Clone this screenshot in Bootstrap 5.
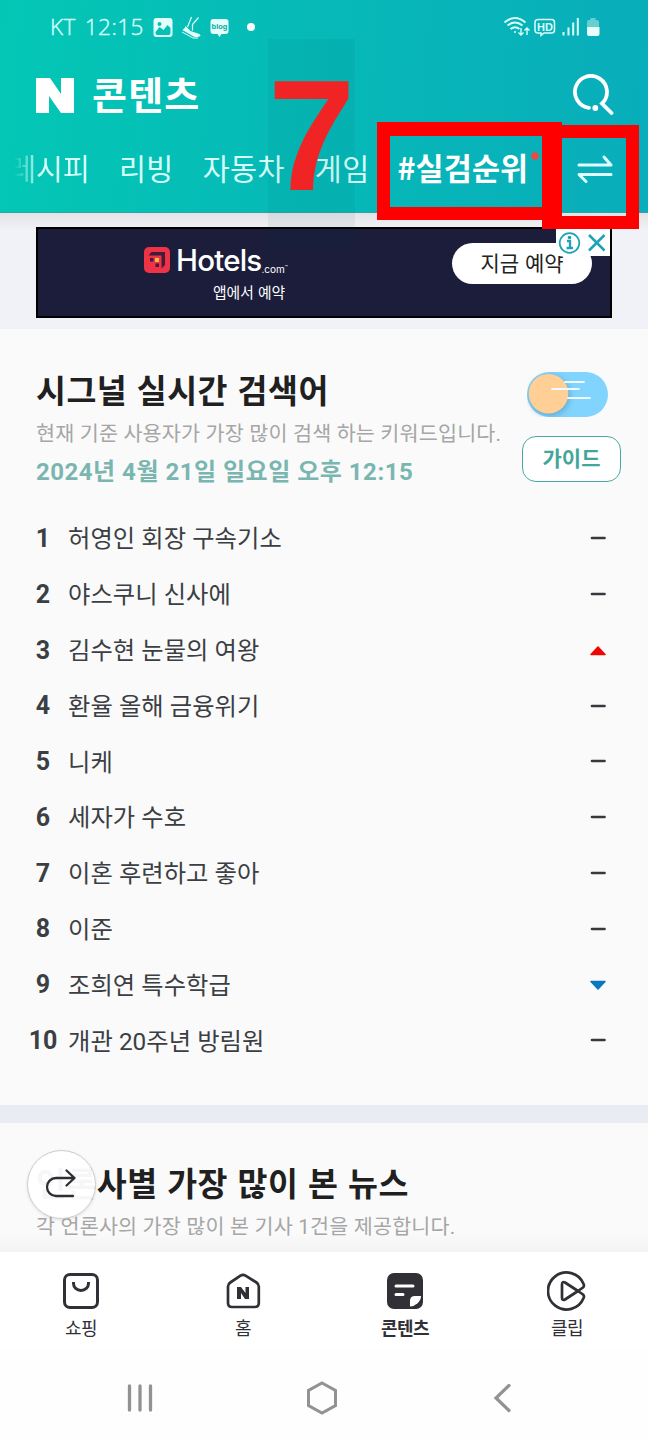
<!DOCTYPE html>
<html lang="ko">
<head>
<meta charset="utf-8">
<meta name="viewport" content="width=device-width, initial-scale=1">
<title>콘텐츠</title>
<link href="https://cdn.jsdelivr.net/npm/bootstrap@5.3.0/dist/css/bootstrap.min.css" rel="stylesheet">
<style>
body{width:648px;height:1440px;overflow:hidden;background:#fafafa;font-family:Roboto,"Noto Sans CJK KR",sans-serif;color:#3b3f44;line-height:1.2}
svg{display:block;flex:none}
.kr{font-family:"Noto Sans CJK KR",sans-serif}
.nw{white-space:nowrap}
.app-head{height:213px;background:linear-gradient(94deg,#03c7b5 0%,#06bab7 45%,#09adbb 100%);border-bottom:1px solid #2aa5a2;color:#fff}
.status{height:54px;padding:0 48px 0 50px;font:400 22.5px/54px "Open Sans","Noto Sans CJK KR",sans-serif;color:#d9fffb}
.clock{letter-spacing:.5px;word-spacing:2.500px;width:99px;font-weight:300;-webkit-text-stroke:.4px #d9fffb}
.brand-row{height:82px;padding:0 33px 0 36px}
.brand-name{font-size:38px;font-weight:700;line-height:78px;height:82px;margin-left:18px;letter-spacing:1.2px}
.cats{height:66px;font-size:29.3px;line-height:66px;color:#d4fffb}
.cats>span,.cats>b,.cats .cut{transform:translateY(-2px)}
.cats>span{letter-spacing:.4px}
.cats .cut{width:78px;margin-left:12px;-webkit-mask-image:linear-gradient(90deg,transparent 2px,#000 30px);mask-image:linear-gradient(90deg,transparent 2px,#000 30px)}
.cats .now{font-size:30.5px;letter-spacing:.1px}
.ad-zone{height:116px;background:linear-gradient(#e4e3e7 0,#f1f2f8 18px);padding:14px 36px 0}
.ad{height:91px;background:#1b1d3b;border:2px solid #000;color:#fff}
.ad-copy{width:152px;margin-left:106px;padding-top:15px}
.hotels{font:500 29.5px/32px Inter,"Noto Sans",sans-serif;letter-spacing:-.8px}
.dotcom{font:400 10px/12px Inter,sans-serif;padding-top:15px}
.ad-sub{font-size:14.8px;line-height:22px;padding-left:69px;margin-top:5px}
.ad-btn{width:140px;height:41px;border-radius:21px;background:#fff;color:#222;font-size:21px;line-height:39px;right:18px;top:14px;text-align:center}
.ad-choices{right:0;top:0;width:54px;height:27px;background:#fff}
.signal{height:776px;padding-top:38px}
.ttl{font-size:32.5px;font-weight:700;color:#202020;line-height:44px;letter-spacing:.5px;margin:0}
.desc{font-size:20.7px;letter-spacing:.17px;line-height:38px;padding-top:4px;height:41px;color:#a6a6a6}
.stamp{font-size:24px;font-weight:700;line-height:41px;height:38px;color:#7ab6b0;letter-spacing:.5px}
.head-l{width:486px;padding-left:36px}
.toggle{width:81px;height:45px;border-radius:23px;background:#80d4fe;margin-left:5px}
.guide{width:99px;height:46px;border:1.6px solid #46aaa1;border-radius:14px;background:#fff;color:#44a59b;font-size:21px;font-weight:700;line-height:41px;text-align:center;margin-top:19px}
.ranks{margin-top:20px}
.rank{height:55.8px;padding:0 42.5px 0 0}
.rank b{width:86px;font-size:25px;text-align:center;flex:none;font-weight:700;line-height:56px;padding-top:2px}
.rank .kw{font-size:24.3px;line-height:56px;margin-left:-18px;padding-top:3px;letter-spacing:.05px}
.rank svg{margin-top:1.500px}
.split{height:18px;background:#e9ecf2}
.news{height:129px;padding:37px 36px 0;background:linear-gradient(#fafafa 85%,#f3f3f3)}
.fab{width:69px;height:69px;left:27px;top:27px;border-radius:50%;background:rgba(255,255,255,.96);border:1px solid #ccc;box-shadow:0 1px 3px rgba(0,0,0,.12)}
.tabs{height:98px;background:#fff;color:#303036;font-size:18px}
.tabs>div{width:162px;padding-top:18px}
.tabs .lbl{line-height:26px;margin-top:1.500px;letter-spacing:-.5px}
.sys{height:90px;background:#fefefe;padding:6px 55px 0 50px}
.note-seven{left:268px;top:39px;width:87px;height:211px;background:rgba(0,60,60,.06);color:#f02424;font:700 157px/193px "Liberation Sans",sans-serif}
.frame-a{left:377px;top:122px;width:185px;height:98px;border:solid red;border-width:14px 20px 13px 13px}
.frame-b{left:542px;top:125px;width:97px;height:104px;border:solid red;border-width:13px 13px 13px 20px}
</style>
</head>
<body class="position-relative">
<header class="app-head">
  <div class="status d-flex align-items-center">
    <span class="nw clock">KT 12:15</span>
    <svg width="94" height="24" viewBox="149.500 15 94 24" fill="#e2fffc">
      <path fill-rule="evenodd" d="M157 18h13a3 3 0 0 1 3 3v13a3 3 0 0 1-3 3h-13a3 3 0 0 1-3-3V21a3 3 0 0 1 3-3zM156 32l4-5 4 3 4-5 3 3v5a2 2 0 0 1-2 2h-11q-2 0-2-2zM160 22a2 2 0 1 1 0 4 2 2 0 0 1 0-4z"/>
      <path d="M183 30q3-2 3-4l5 5 9 3q1 1 1 2-3 2-7 .5z"/><path d="M182.500 32l11 6h5" fill="none" stroke="#e2fffc"/><path d="M192 17l-4 10M199 17.500l-6 7v6" fill="none" stroke="#e2fffc" stroke-width="1.200"/>
      <path d="M214 19h12a3 3 0 0 1 3 3v9a3 3 0 0 1-3 3h-4l-2 3-2-3h-4a3 3 0 0 1-3-3v-9a3 3 0 0 1 3-3z"/>
      <text x="220" y="29" font-size="7.500" font-weight="700" text-anchor="middle" fill="#06a5a0" font-family="Liberation Sans">blog</text>
    </svg>
    <svg width="10" height="10" viewBox="0.500 0 10 10" class="ms-1"><circle cx="4.500" cy="5" r="4" fill="#fff"/></svg>
    <svg class="ms-auto" width="98" height="24" viewBox="502 15 98 24" fill="none" stroke="#d9fffb" stroke-width="2">
      <path d="M504.500 22.500q10.500-9 21 0M507.500 25.500q7.500-6 15 0M510.500 29q4.500-3.500 9 0"/><circle cx="515" cy="32" r="1" fill="#d9fffb" stroke="none"/>
      <path d="M521 28v7m-2.500-2.500 2.500 2.500 2.500-2.500M527 35v-7m-2.500 2.500 2.500-2.500 2.500 2.500" stroke-width="1.400"/>
      <path d="M537.500 19.500h14a3 3 0 0 1 3 3V30a3 3 0 0 1-3 3H544l-3 2.500V33h-3a3 3 0 0 1-3-3v-7.500a3 3 0 0 1 3-3z" stroke-width="1.500"/>
      <text x="545" y="30.500" font-size="11" font-weight="700" text-anchor="middle" fill="#d9fffb" stroke="none" font-family="Liberation Sans">HD</text>
      <path d="M563.500 32v3.500M568.500 27.500v8M573.200 22.500v13M577.800 18v17.500"/>
      <path d="M587 27v-5q0-2 2-2h1.500v-2h5v2h1.500q2 0 2 2v5z" fill="#68cfcf" stroke="none"/><path d="M587 27h12.500v7q0 2-2 2H589q-2 0-2-2z" fill="#e9fffd" stroke="none"/>
    </svg>
  </div>
  <div class="brand-row d-flex align-items-center">
    <svg width="38" height="35" viewBox="0 0 38 35" fill="#fff"><path d="M0 0h14l11 16V0h13v35H25L13 18v17H0z"/></svg>
    <span class="brand-name kr nw">콘텐츠</span>
    <svg class="ms-auto" width="42" height="42" viewBox="0 0 42 42" fill="none" stroke="#fff" stroke-width="3.800" stroke-linecap="round"><path d="M16 33.800A16 16 0 1 1 29 29.500L38.500 39"/><circle cx="22.300" cy="34" r="2.900" fill="#fff" stroke="none"/></svg>
  </div>
  <div class="cats kr d-flex align-items-center nw">
    <div class="cut d-flex justify-content-end overflow-hidden"><span>레시피</span></div>
    <span style="margin-left:29px">리빙</span>
    <span style="margin-left:29px">자동차</span>
    <span style="margin-left:30px">게임</span>
    <b class="now text-white" style="margin-left:28px">#실검순위</b>
    <svg width="8" height="40" viewBox="0 0 8 40" style="margin-left:3px"><circle cx="4" cy="7" r="3.800" fill="#e94b42"/></svg>
    <svg class="ms-auto" width="36" height="30" viewBox="0 0 36 30" fill="none" stroke="#e2ffff" stroke-width="3" stroke-linecap="round" stroke-linejoin="round" style="margin-right:35px"><path d="M2 11h32l-7-8M34 20.500H2l7 7"/></svg>
  </div>
</header>

<section class="ad-zone">
  <div class="ad position-relative">
    <div class="ad-copy">
      <div class="d-flex align-items-center nw">
        <svg width="26" height="26" viewBox="0 0 26 26"><rect width="26" height="26" rx="5" fill="#ee3346"/><path d="M4.500 8.500l3-3.500H21v13l-3.500 3.500v-13z" fill="#441c39"/><path d="M6 11h3.500v3.500H6zM11.500 16.500H15V20h-3.500z" fill="#441c39"/><path d="M11 11h4v4h-4z" fill="#fdba3f"/></svg>
        <span class="hotels" style="margin-left:6px">Hotels</span><span class="dotcom">.com<small style="font-size:5px;vertical-align:4px">™</small></span>
      </div>
      <div class="ad-sub kr nw">앱에서 예약</div>
    </div>
    <div class="ad-btn kr position-absolute">지금 예약</div>
    <div class="ad-choices position-absolute d-flex align-items-center">
      <svg width="54" height="27" viewBox="0 0 54 27" fill="none" stroke="#1ca3b8" stroke-width="2"><circle cx="13.500" cy="14" r="9.800" stroke-width="1.700"/><path d="M11 12h3v7m-3.500 0h6.500" stroke-width="2.300"/><circle cx="13.500" cy="8.500" r="1.800" fill="#1ca3b8" stroke="none"/><path d="M33 6l15.500 15.500M48.500 6L33 21.500" stroke-width="2.500"/></svg>
    </div>
  </div>
</section>

<main>
  <section class="signal">
    <div class="d-flex">
      <div class="head-l nw">
        <h1 class="ttl kr">시그널 실시간 검색어</h1>
        <div class="desc">현재 기준 사용자가 가장 많이 검색 하는 키워드입니다.</div>
        <div class="stamp"><span>2024년 4월 21일 일요일 오후 12:15</span></div>
      </div>
      <div class="flex-shrink-0" style="margin-left:36px;padding-top:5px">
        <div class="toggle"><svg width="81" height="45" viewBox="0 0 81 45"><circle cx="21.500" cy="21.700" r="19.800" fill="#ffcf96" style="filter:drop-shadow(1px 2px 3px rgba(40,80,110,.35))"/><path d="M38 10h19M25 17h27M41 26h22" stroke="#eefaff" stroke-width="1.800" stroke-linecap="round"/></svg></div>
        <div class="guide kr">가이드</div>
      </div>
    </div>
    <div class="ranks" id="ranks"></div>
  </section>
  <div class="split"></div>
  <section class="news position-relative nw">
    <h2 class="ttl kr">언론사별 가장 많이 본 뉴스</h2>
    <div class="desc">각 언론사의 가장 많이 본 기사 1건을 제공합니다.</div>
    <div class="fab position-absolute d-flex align-items-center justify-content-center">
      <svg width="32" height="30" viewBox="1 2 32 30" class="overflow-visible" fill="none" stroke="#2d2e34" stroke-width="2.300" stroke-linecap="round" stroke-linejoin="round"><path d="M21.500 2.500l8 7.500-8 7.500M29.500 10H11a9 9 0 0 0 0 18h17"/></svg>
    </div>
  </section>
</main>

<nav class="tabs kr d-flex text-center">
  <div class="d-flex flex-column align-items-center">
    <svg width="40" height="42" viewBox="0 0 40 42" fill="none" stroke="#303036" stroke-width="3"><rect x="3.500" y="4.500" width="33" height="33" rx="5.500"/><path d="M12.500 12v1.500a7.500 7 0 0 0 15 0V12"/></svg>
    <span class="lbl">쇼핑</span>
  </div>
  <div class="d-flex flex-column align-items-center">
    <svg width="40" height="42" viewBox="0 0 40 42" fill="none" stroke="#303036" stroke-width="2.700" stroke-linejoin="round"><path d="M17.500 5.600q2.500-1.500 5 0l11 6.900q2.300 1.500 2.300 4V33q0 4-4 4H9q-4 0-4-4V16.500q0-2.500 2.300-4z"/><path d="M14 17h4l4.500 6v-6H26v12h-4l-4-6v6h-4z" fill="#303036" stroke="none"/></svg>
    <span class="lbl">홈</span>
  </div>
  <div class="d-flex flex-column align-items-center">
    <svg width="40" height="42" viewBox="0 0 40 42"><rect x="2" y="3" width="36" height="36" rx="7" fill="#303036"/><path d="M11 16h17M11 24.500h7" stroke="#fff" stroke-width="3" stroke-linecap="round"/><path d="M25 36.500V31q0-5 5-5h6q0 4-3.500 7.200T25 36.500z" fill="#fff"/></svg>
    <b class="lbl">콘텐츠</b>
  </div>
  <div class="d-flex flex-column align-items-center">
    <svg width="40" height="42" viewBox="0 0 40 42" fill="none" stroke="#303036" stroke-width="2.700" stroke-linejoin="round" stroke-linecap="round"><path d="M31 21l5-3.500q1.500-1.500.6-3.500A18.500 18.500 0 1 0 36.600 28q1-2-.6-3.500z"/><path d="M15 14.500q0-3.500 3-2L31 21l-13 8.500q-3 1.500-3-2z"/></svg>
    <span class="lbl">클립</span>
  </div>
</nav>
<footer class="sys d-flex justify-content-around align-items-center">
  <svg width="28" height="34" viewBox="0 0 28 34" stroke="#929292" stroke-width="3.300" stroke-linecap="round"><path d="M3.500 5v24M14 5v24M24.500 5v24"/></svg>
  <svg width="34" height="36" viewBox="0 0 34 36" fill="none" stroke="#929292" stroke-width="3"><path d="M17 3l13.500 7.500v15L17 33 3.500 25.500v-15z"/></svg>
  <svg width="28" height="34" viewBox="2 0 28 34" fill="none" stroke="#929292" stroke-width="3.200" stroke-linecap="round"><path d="M21 4.500L8 17l13 12.500"/></svg>
</footer>

<div class="note-seven position-absolute">7</div>
<div class="frame-a position-absolute"></div>
<div class="frame-b position-absolute"></div>

<script src="https://cdn.jsdelivr.net/npm/bootstrap@5.3.0/dist/js/bootstrap.bundle.min.js"></script>
<script>
const shapes={
  same:'<path d="M2 5h12.500" stroke="#36383d" stroke-width="2.600" stroke-linecap="round"/>',
  up:'<path d="M1 9.500L8 2l7 7.500z" fill="#f00505" stroke="#f00505" stroke-width="1.500" stroke-linejoin="round"/>',
  down:'<path d="M1 1.500h14L8 9z" fill="#0877c2" stroke="#0877c2" stroke-width="1.500" stroke-linejoin="round"/>'
};
const words=[['허영인 회장 구속기소'],['야스쿠니 신사에'],['김수현 눈물의 여왕','up'],['환율 올해 금융위기'],['니케'],['세자가 수호'],['이혼 후련하고 좋아'],['이준'],['조희연 특수학급','down'],['개관 20주년 방림원']];
document.getElementById('ranks').innerHTML=words.map(([w,d='same'],i)=>
  `<div class="rank d-flex align-items-center nw"><b>${i+1}</b><span class="kw">${w}</span><svg class="ms-auto" width="16" height="11" viewBox="0 0 16 11">${shapes[d]}</svg></div>`).join('');
</script>
</body>
</html>
